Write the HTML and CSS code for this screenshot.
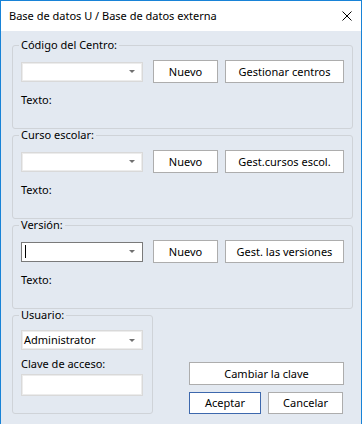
FILE: index.html
```html
<!DOCTYPE html>
<html lang="es">
<head>
    <meta charset="UTF-8">
    <title>Base de datos U / Base de datos externa</title>
    <link rel="stylesheet" href="styles.css">
</head>
<body>

    <div class="window">
        <!-- Title bar -->
        <div class="titlebar">
            <span class="title">Base de datos U / Base de datos externa</span>
            <svg class="close" width="10" height="10" viewBox="0 0 10 10">
                <path d="M0.5 0.5 L9.5 9.5 M9.5 0.5 L0.5 9.5" stroke="#000" stroke-width="1" fill="none"/>
            </svg>
        </div>

        <div class="content">
            <!-- Código del Centro -->
            <fieldset class="group">
                <legend>Código del Centro:</legend>
                <div class="row">
                    <div class="combo"><span></span><i class="arrow"></i></div>
                    <button class="btn btn-new">Nuevo</button>
                    <button class="btn btn-manage">Gestionar centros</button>
                </div>
                <div class="label">Texto:</div>
            </fieldset>

            <!-- Curso escolar -->
            <fieldset class="group">
                <legend>Curso escolar:</legend>
                <div class="row">
                    <div class="combo"><span></span><i class="arrow"></i></div>
                    <button class="btn btn-new">Nuevo</button>
                    <button class="btn btn-manage">Gest.cursos escol.</button>
                </div>
                <div class="label">Texto:</div>
            </fieldset>

            <!-- Versión -->
            <fieldset class="group">
                <legend>Versión:</legend>
                <div class="row">
                    <div class="combo focused"><span class="caret"></span><i class="arrow"></i></div>
                    <button class="btn btn-new">Nuevo</button>
                    <button class="btn btn-manage">Gest. las versiones</button>
                </div>
                <div class="label">Texto:</div>
            </fieldset>

            <!-- Usuario + buttons -->
            <div class="bottom">
                <fieldset class="group user">
                    <legend>Usuario:</legend>
                    <div class="combo"><span>Administrator</span><i class="arrow"></i></div>
                    <div class="label small">Clave de acceso:</div>
                    <div class="input"></div>
                </fieldset>

                <div class="actions">
                    <button class="btn btn-wide">Cambiar la clave</button>
                    <div class="action-row">
                        <button class="btn btn-ok">Aceptar</button>
                        <button class="btn btn-cancel">Cancelar</button>
                    </div>
                </div>
            </div>
        </div>
    </div>

</body>
</html>
```

FILE: styles.css
```css
body {
    margin: 0;
    padding: 0;
    font-family: "Noto Sans", "Open Sans", sans-serif;
    font-size: 11px;
    color: #000;
    background-color: #ffffff;
}

/* Window frame */
.window {
    width: 362px;
    height: 424px;
    box-sizing: border-box;
    border: 1px solid #1883d7;
    display: flex;
    flex-direction: column;
}

.titlebar {
    height: 30px;
    flex-shrink: 0;
    background-color: #ffffff;
    display: flex;
    align-items: center;
    justify-content: space-between;
    padding: 0 9px 0 8px;
}

.title {
    font-size: 11px;
    line-height: 16px;
}

.close {
    display: block;
}

.content {
    flex: 1;
    background-color: #e3e9f1;
    padding: 8px 8px 11px 11px;
    display: flex;
    flex-direction: column;
}

/* Group boxes */
.group {
    margin: 0;
    border: 1px solid #cfd3d8;
    border-radius: 3px;
    padding: 9px 8px 20px 8px;
    min-width: 0;
}

.group legend {
    padding: 0 2px;
    margin-left: -2px;
    line-height: 12px;
}

.row {
    display: flex;
    align-items: center;
}

.combo {
    width: 122px;
    height: 20px;
    box-sizing: border-box;
    background-color: #ffffff;
    border: 1px solid #d9d9d9;
    box-shadow: inset 0 0 0 1px #ececec;
    display: flex;
    align-items: center;
    justify-content: space-between;
    padding: 0 7px 0 2px;
    line-height: 16px;
}

.combo.focused {
    border-color: #7a7a7a;
    box-shadow: none;
}

.caret {
    width: 1px;
    height: 13px;
    background-color: #000;
    margin-left: 1px;
}

.arrow {
    width: 0;
    height: 0;
    border-left: 3px solid transparent;
    border-right: 3px solid transparent;
    border-top: 3px solid #707070;
}

.label {
    margin-top: 9px;
    line-height: 16px;
}

.label.small {
    margin-top: 6px;
}

.input {
    margin-top: 2px;
    width: 122px;
    height: 22px;
    box-sizing: border-box;
    background-color: #ffffff;
    border: 1px solid #d9d9d9;
    box-shadow: inset 0 0 0 1px #ececec;
}

/* Buttons */
.btn {
    font-family: "Noto Sans", "Open Sans", sans-serif;
    font-size: 11px;
    line-height: 16px;
    color: #000;
    background-color: #ffffff;
    border: 1px solid #adadad;
    border-radius: 0;
    height: 23px;
    padding: 0;
    margin: 0;
}

.btn-new {
    width: 65px;
    margin-left: 10px;
}

.btn-manage {
    width: 119px;
    margin-left: 7px;
}

/* Bottom area */
.bottom {
    display: flex;
    justify-content: space-between;
    align-items: flex-end;
}

.group.user {
    width: 141px;
    box-sizing: border-box;
    padding-bottom: 17px;
}

.actions {
    display: flex;
    flex-direction: column;
    gap: 7px;
    width: 155px;
    margin-right: 9px;
}

.btn-wide {
    width: 155px;
}

.action-row {
    display: flex;
    gap: 7px;
}

.btn-ok {
    width: 72px;
    height: 22px;
    border-color: #3d68ad;
}

.btn-cancel {
    width: 75px;
    height: 22px;
}
```
